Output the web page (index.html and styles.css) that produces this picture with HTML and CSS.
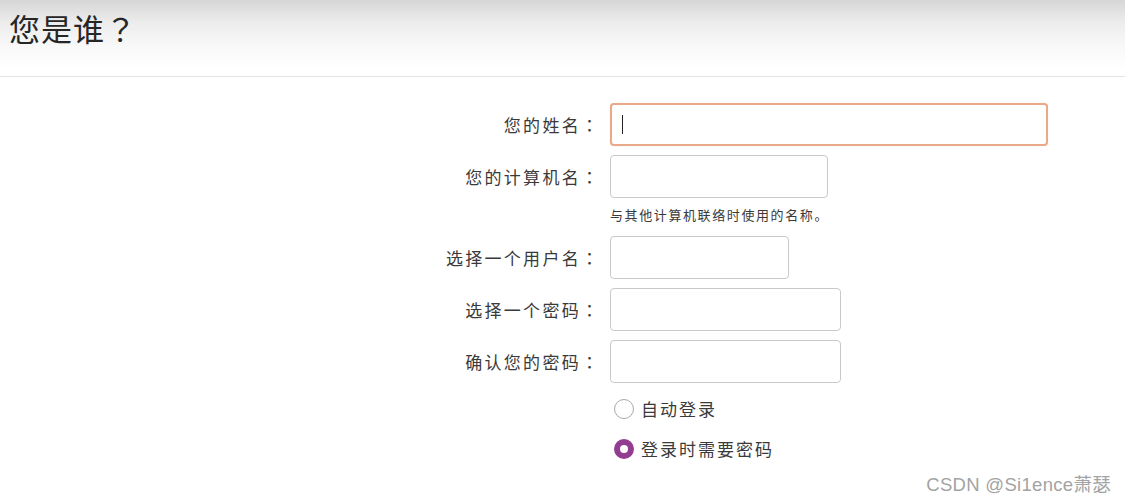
FILE: index.html
```html
<!DOCTYPE html>
<html lang="zh-CN">
<head>
<meta charset="utf-8">
<title>您是谁？</title>
<link rel="stylesheet" href="styles.css">
</head>
<body>
<header class="header">
  <h1 class="title">您是谁<span class="punct">？</span></h1>
</header>
<main class="form">
  <label class="label">您的姓名<span class="punct">：</span></label>
  <div class="field"><div class="input input-focus w-name"><span class="caret"></span></div></div>

  <label class="label">您的计算机名<span class="punct">：</span></label>
  <div class="field"><div class="input w-computer"></div></div>

  <div class="label"></div>
  <div class="hint">与其他计算机联络时使用的名称。</div>

  <label class="label">选择一个用户名<span class="punct">：</span></label>
  <div class="field"><div class="input w-user"></div></div>

  <label class="label">选择一个密码<span class="punct">：</span></label>
  <div class="field"><div class="input w-pass"></div></div>

  <label class="label">确认您的密码<span class="punct">：</span></label>
  <div class="field"><div class="input w-pass"></div></div>

  <div class="label"></div>
  <div class="radios">
    <div class="radio-row"><span class="radio"></span><span class="radio-text">自动登录</span></div>
    <div class="radio-row"><span class="radio radio-on"></span><span class="radio-text">登录时需要密码</span></div>
  </div>
</main>
<div class="watermark">CSDN @Si1ence萧瑟</div>
</body>
</html>
```
FILE: styles.css
```css
html, body {
  margin: 0;
  padding: 0;
  background: #ffffff;
  width: 1125px;
  height: 504px;
  overflow: hidden;
  position: relative;
  font-family: "Noto Sans CJK SC", "Noto Sans", "DejaVu Sans", sans-serif;
  color: #333333;
  text-spacing-trim: space-all;
}

.punct {
  font-family: "Noto Sans CJK TC", "Noto Sans CJK SC", sans-serif;
  display: inline-block;
  width: 1em;
  text-align: center;
  text-spacing-trim: space-all;
}

.header {
  height: 76px;
  border-bottom: 1px solid #e2e2e2;
  background: linear-gradient(to bottom, #d6d6d6 0px, #ececec 22px, #f8f8f8 45px, #ffffff 70px);
  box-sizing: content-box;
}

.title {
  margin: 0;
  padding: 0 0 0 9px;
  font-size: 31px;
  font-weight: normal;
  line-height: 56px;
  color: #262626;
  letter-spacing: 1px;
}

.form {
  display: grid;
  grid-template-columns: 598px 1fr;
  column-gap: 12px;
  row-gap: 9px;
  padding-top: 26px;
  align-items: center;
}

.label {
  justify-self: end;
  font-size: 17px;
  letter-spacing: 2.3px;
  color: #3a3a3a;
}

.field {
  display: flex;
}

.input {
  box-sizing: border-box;
  height: 43px;
  border: 1px solid #c9c9c9;
  border-radius: 4px;
  background: #ffffff;
  display: flex;
  align-items: center;
}

.input-focus {
  border: 2px solid #eaa98b;
  box-shadow: 0 0 1px #f3cdb9;
}

.caret {
  display: block;
  width: 1px;
  height: 19px;
  background: #222222;
  margin-left: 10px;
}

.w-name { width: 438px; }
.w-computer { width: 218px; }
.w-user { width: 179px; }
.w-pass { width: 231px; }

.hint {
  font-size: 13px;
  letter-spacing: 1.6px;
  color: #3a3a3a;
  line-height: 18px;
  margin-top: -1px;
  margin-bottom: 3px;
}

.radios {
  display: flex;
  flex-direction: column;
  gap: 19px;
  padding-left: 4px;
  padding-top: 6px;
}

.radio-row {
  display: flex;
  align-items: center;
  gap: 7px;
  height: 21px;
}

.radio {
  box-sizing: border-box;
  width: 20px;
  height: 20px;
  border-radius: 50%;
  border: 1px solid #a9a9a9;
  background: #ffffff;
}

.radio-on {
  border: 6px solid #923d8f;
  background: #ffffff;
}

.radio-text {
  font-size: 17px;
  letter-spacing: 2px;
  color: #3a3a3a;
}

.watermark {
  position: absolute;
  right: 14px;
  bottom: 8px;
  font-family: "Liberation Sans", "Noto Sans CJK SC", sans-serif;
  font-size: 18.5px;
  letter-spacing: 0.3px;
  color: #a3a3a3;
  text-shadow: 0 0 1px #ffffff;
}
```
